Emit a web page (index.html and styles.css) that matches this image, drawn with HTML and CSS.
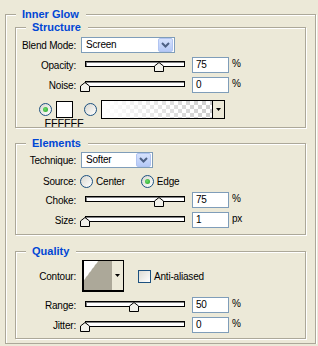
FILE: index.html
```html
<!DOCTYPE html>
<html lang="en">
<head>
    <meta charset="UTF-8">
    <meta name="viewport" content="width=device-width, initial-scale=1.0">
    <title>Inner Glow</title>
    <link rel="stylesheet" href="styles.css">
</head>
<body>
    <div class="group outer">
        <div class="group-title">Inner Glow</div>

        <!-- Structure -->
        <div class="group inner structure">
            <div class="group-title">Structure</div>
            <div class="row row-select">
                <span class="label">Blend Mode:</span>
                <div class="select select-blend">
                    <span class="select-text">Screen</span>
                    <span class="select-btn"><svg width="9" height="6" viewBox="0 0 9 6"><path d="M1 1 L4.5 4.5 L8 1" fill="none" stroke="#4d6185" stroke-width="2"/></svg></span>
                </div>
            </div>
            <div class="row row-slider">
                <span class="label">Opacity:</span>
                <div class="slider">
                    <div class="track"></div>
                    <svg class="thumb" style="left: 73px" width="10" height="10" viewBox="0 0 10 10"><polygon points="5,0.5 9.5,4 9.5,9.5 0.5,9.5 0.5,4" fill="#f2f1ea" stroke="#000"/></svg>
                </div>
                <div class="field">75</div>
                <span class="unit">%</span>
            </div>
            <div class="row row-slider">
                <span class="label">Noise:</span>
                <div class="slider">
                    <div class="track"></div>
                    <svg class="thumb" style="left: -1px" width="10" height="10" viewBox="0 0 10 10"><polygon points="5,0.5 9.5,4 9.5,9.5 0.5,9.5 0.5,4" fill="#f2f1ea" stroke="#000"/></svg>
                </div>
                <div class="field">0</div>
                <span class="unit">%</span>
            </div>
            <div class="row row-color">
                <span class="radio checked"></span>
                <span class="swatch"></span>
                <span class="radio radio-gap"></span>
                <div class="gradient">
                    <span class="gradient-preview"></span>
                    <span class="gradient-btn"><svg width="5" height="3" viewBox="0 0 5 3"><polygon points="0,0 5,0 2.5,3" fill="#000"/></svg></span>
                </div>
            </div>
            <div class="hex">FFFFFF</div>
        </div>

        <!-- Elements -->
        <div class="group inner elements">
            <div class="group-title">Elements</div>
            <div class="row row-select">
                <span class="label">Technique:</span>
                <div class="select select-technique">
                    <span class="select-text">Softer</span>
                    <span class="select-btn"><svg width="9" height="6" viewBox="0 0 9 6"><path d="M1 1 L4.5 4.5 L8 1" fill="none" stroke="#4d6185" stroke-width="2"/></svg></span>
                </div>
            </div>
            <div class="row row-source">
                <span class="label">Source:</span>
                <span class="option"><span class="radio"></span>Center</span>
                <span class="option"><span class="radio checked"></span>Edge</span>
            </div>
            <div class="row row-slider">
                <span class="label">Choke:</span>
                <div class="slider">
                    <div class="track"></div>
                    <svg class="thumb" style="left: 73px" width="10" height="10" viewBox="0 0 10 10"><polygon points="5,0.5 9.5,4 9.5,9.5 0.5,9.5 0.5,4" fill="#f2f1ea" stroke="#000"/></svg>
                </div>
                <div class="field">75</div>
                <span class="unit">%</span>
            </div>
            <div class="row row-slider">
                <span class="label">Size:</span>
                <div class="slider">
                    <div class="track"></div>
                    <svg class="thumb" style="left: -1px" width="10" height="10" viewBox="0 0 10 10"><polygon points="5,0.5 9.5,4 9.5,9.5 0.5,9.5 0.5,4" fill="#f2f1ea" stroke="#000"/></svg>
                </div>
                <div class="field">1</div>
                <span class="unit">px</span>
            </div>
        </div>

        <!-- Quality -->
        <div class="group inner quality">
            <div class="group-title">Quality</div>
            <div class="row row-contour">
                <span class="label">Contour:</span>
                <div class="contour">
                    <svg class="contour-preview" width="28" height="29" viewBox="0 0 28 29"><rect width="28" height="29" fill="#aca899"/><polygon points="0,0 14,0 13,2 11,4 10,6 8,8 7,10 5,12 4,14 2,16 1,18 0,19" fill="#fff"/></svg>
                    <span class="contour-btn"><svg width="5" height="3" viewBox="0 0 5 3"><polygon points="0,0 5,0 2.5,3" fill="#000"/></svg></span>
                </div>
                <span class="checkbox"></span>
                <span class="check-label">Anti-aliased</span>
            </div>
            <div class="row row-slider">
                <span class="label">Range:</span>
                <div class="slider">
                    <div class="track"></div>
                    <svg class="thumb" style="left: 48px" width="10" height="10" viewBox="0 0 10 10"><polygon points="5,0.5 9.5,4 9.5,9.5 0.5,9.5 0.5,4" fill="#f2f1ea" stroke="#000"/></svg>
                </div>
                <div class="field">50</div>
                <span class="unit">%</span>
            </div>
            <div class="row row-slider">
                <span class="label">Jitter:</span>
                <div class="slider">
                    <div class="track"></div>
                    <svg class="thumb" style="left: -1px" width="10" height="10" viewBox="0 0 10 10"><polygon points="5,0.5 9.5,4 9.5,9.5 0.5,9.5 0.5,4" fill="#f2f1ea" stroke="#000"/></svg>
                </div>
                <div class="field">0</div>
                <span class="unit">%</span>
            </div>
        </div>
    </div>
</body>
</html>
```

FILE: styles.css
```css
* {
    box-sizing: border-box;
}
body {
    font-family: "Liberation Sans", Arial, sans-serif;
    font-size: 10px;
    letter-spacing: -0.2px;
    color: #000;
    background-color: #ece9d8;
    margin: 0;
    padding: 0;
}

/* etched group boxes */
.group {
    border: 1px solid #aca899;
    box-shadow: 1px 1px 0 #fff, inset 1px 1px 0 #fff;
}
.group-title {
    width: fit-content;
    height: 13px;
    line-height: 13px;
    margin: -7px 0 0 10px;
    padding: 0 7px 0 6px;
    font-size: 11px;
    font-weight: bold;
    letter-spacing: 0;
    color: #0046d5;
    background-color: #ece9d8;
}
.outer {
    width: 311px;
    margin: 14px 0 0 5px;
    padding: 0 0 4px 0;
}
.inner {
    width: 291px;
    margin-left: 9px;
}
.structure {
    margin-top: 6px;
}
.elements {
    margin-top: 15px;
    padding-bottom: 6px;
}
.quality {
    margin-top: 16px;
    padding-bottom: 5px;
}

/* rows */
.row {
    display: flex;
    align-items: center;
    height: 16px;
}
.label {
    flex: none;
    width: 60px;
    margin-right: 5px;
    text-align: right;
    white-space: nowrap;
}
.structure .row-select { margin-top: 3px; }
.elements .row-select { margin-top: 2px; }
.row-slider { margin-top: 4px; }
.row-color {
    height: 19px;
    margin-top: 7px;
}
.row-source {
    height: 13px;
    margin-top: 7px;
}
.row-source .label {
    margin-right: 4px;
}
.row-contour {
    height: 32px;
    margin-top: 2px;
}
.row-contour .label {
    margin-right: 6px;
}
.quality .row-contour + .row-slider {
    margin-top: 5px;
}

/* combo boxes */
.select {
    display: flex;
    align-items: center;
    justify-content: space-between;
    height: 16px;
    padding: 1px;
    border: 1px solid #7f9db9;
    background-color: #fff;
}
.select-blend { width: 94px; }
.select-technique { width: 72px; }
.select-text {
    padding-left: 3px;
    line-height: 14px;
}
.select-btn {
    display: flex;
    align-items: center;
    justify-content: center;
    width: 15px;
    height: 14px;
    border: 1px solid #b1c4f1;
    border-radius: 2px;
    background: linear-gradient(#d6e2fd, #b5c9f7);
}

/* sliders */
.slider {
    position: relative;
    flex: none;
    width: 108px;
    height: 16px;
}
.track {
    width: 100px;
    height: 6px;
    margin: 4px 0 0 4px;
    border: 1px solid #000;
    background-color: #fff;
    box-shadow: inset 1px 1px 0 #808080;
}
.thumb {
    position: absolute;
    top: 5px;
    display: block;
}
.field {
    flex: none;
    width: 37px;
    height: 16px;
    margin-left: 3px;
    padding-left: 3px;
    line-height: 14px;
    border: 1px solid #7f9db9;
    background-color: #fff;
}
.unit {
    margin: 0 0 3px 3px;
    font-size: 10px;
}

/* radios and checkbox */
.radio {
    position: relative;
    flex: none;
    width: 13px;
    height: 13px;
    border: 1px solid #1c5180;
    border-radius: 50%;
    background: linear-gradient(135deg, #d8d7cf, #fff);
}
.radio.checked::after {
    content: "";
    position: absolute;
    left: 3px;
    top: 3px;
    width: 5px;
    height: 5px;
    border-radius: 50%;
    background: radial-gradient(circle at 40% 40%, #6cdc6c, #21a121);
}
.row-color .radio:first-child {
    margin-left: 23px;
}
.radio-gap {
    margin-left: 11px;
}
.option {
    display: flex;
    align-items: center;
    gap: 3px;
    margin-right: 16px;
}
.checkbox {
    flex: none;
    width: 13px;
    height: 13px;
    margin-left: 14px;
    border: 1px solid #1c5180;
    background: linear-gradient(135deg, #dcdbd3, #fff);
}
.check-label {
    margin-left: 3px;
}

/* colour and gradient pickers */
.swatch {
    flex: none;
    width: 17px;
    height: 17px;
    margin-left: 4px;
    border: 1px solid #000;
    background-color: #fff;
}
.gradient {
    display: flex;
    flex: none;
    width: 124px;
    height: 19px;
    margin-left: 4px;
    border: 1px solid #000;
}
.gradient-preview {
    flex: 1;
    border-right: 1px solid #000;
    background:
        linear-gradient(to right, #fff, rgba(255, 255, 255, 0)),
        repeating-conic-gradient(#cdcdcd 0 25%, #fff 0 50%) 0 0 / 8px 8px;
}
.gradient-btn {
    display: flex;
    align-items: center;
    justify-content: center;
    width: 11px;
}
.hex {
    width: 50px;
    height: 8px;
    margin-left: 23px;
    font-size: 11px;
    line-height: 8px;
    text-align: center;
}

/* contour picker */
.contour {
    display: flex;
    flex: none;
    width: 42px;
    height: 32px;
    border: 1px solid #000;
    border-left-width: 2px;
    border-bottom-width: 2px;
}
.contour-preview {
    display: block;
}
.contour-btn {
    display: flex;
    align-items: center;
    justify-content: center;
    flex: 1;
}
```
